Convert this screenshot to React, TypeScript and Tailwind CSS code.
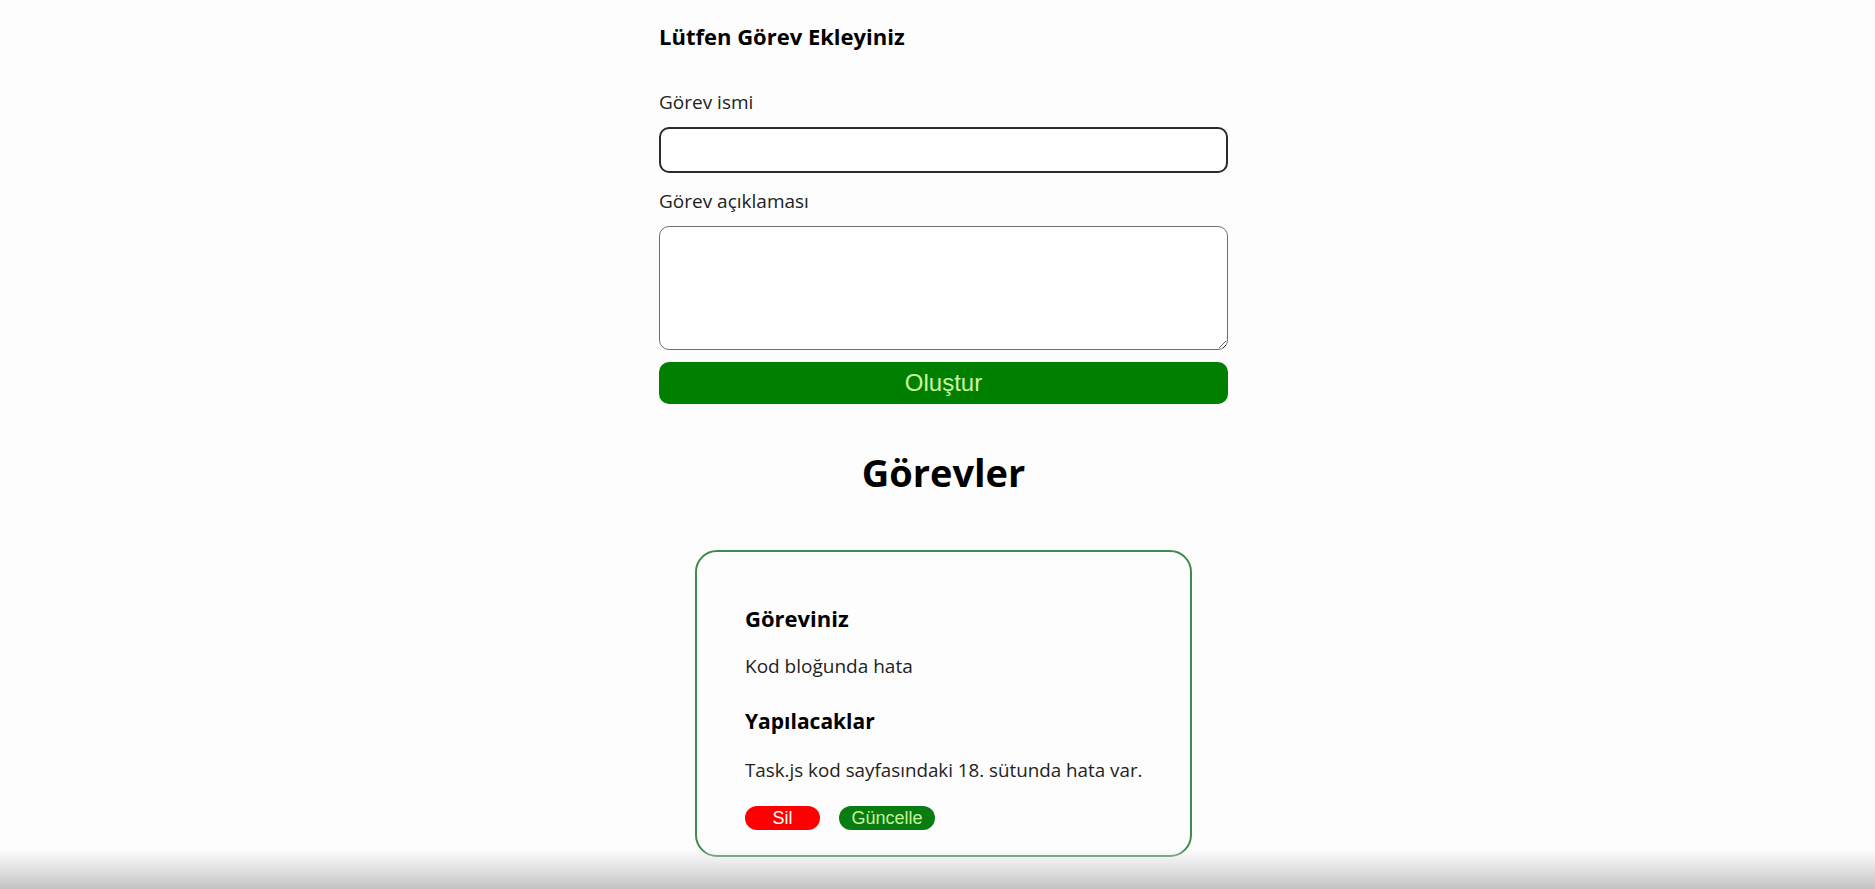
import React, { useState } from "react";

type Task = { id: number; title: string; desc: string };

const TaskCard = ({ task }: { task: Task }) => {
  return (
    <div className="mt-[54px] w-[497px] rounded-[22px] border-2 border-[#3f8a4c] pt-[52px] pr-[30px] pb-[25px] pl-[48px]">
      <h3 className="text-[22px] leading-[28px] font-bold text-black">Göreviniz</h3>
      <p className="mt-[22px] text-[19px] leading-[24px] text-[#222]">{task.title}</p>
      <h3 className="mt-[29px] text-[21px] leading-[28px] font-bold text-black">Yapılacaklar</h3>
      <p className="mt-[23px] whitespace-nowrap text-[18.8px] leading-[24px] text-[#222]">{task.desc}</p>
      <div className="mt-[24px] flex gap-[19px] font-['Liberation_Sans',Arial,sans-serif]">
        <button className="h-[24px] w-[75px] rounded-full bg-[#ff0000] text-[18px] leading-[24px] text-white">
          Sil
        </button>
        <button className="h-[24px] w-[96px] rounded-full bg-[#0a7d12] text-[18px] leading-[24px] text-[#c5f29a]">
          Güncelle
        </button>
      </div>
    </div>
  );
};

export default function App() {
  const [title, setTitle] = useState("");
  const [desc, setDesc] = useState("");
  const [tasks] = useState<Task[]>([
    {
      id: 1,
      title: "Kod bloğunda hata",
      desc: "Task.js kod sayfasındaki 18. sütunda hata var.",
    },
  ]);

  return (
    <div className="relative min-h-screen overflow-hidden bg-[#fdfdfd] font-['Open_Sans','Noto_Sans',sans-serif] text-black">
      <div className="flex justify-center pl-3">
        <div className="flex w-[569px] flex-col">
          <h3 className="pt-[22px] text-[22px] leading-[28px] font-bold">Lütfen Görev Ekleyiniz</h3>

          <label className="mt-[39px] text-[19px] leading-[26px] text-[#222]">Görev ismi</label>
          <input
            value={title}
            onChange={(e) => setTitle(e.target.value)}
            className="mt-[12px] h-[46px] rounded-[10px] border-2 border-[#2b2b2b] bg-white px-3 outline-none"
          />

          <label className="mt-[15px] text-[19px] leading-[26px] text-[#222]">Görev açıklaması</label>
          <textarea
            value={desc}
            onChange={(e) => setDesc(e.target.value)}
            className="mt-[12px] h-[124px] rounded-[10px] border border-[#6f6f6f] bg-white px-3 py-2 outline-none"
          />

          <button className="mt-[12px] h-[42px] rounded-[10px] bg-[#008000] font-['Liberation_Sans',Arial,sans-serif] text-[24px] text-[#cdf59f]">
            Oluştur
          </button>

          <h1 className="mt-[44px] text-center text-[38px] leading-[48px] font-bold">Görevler</h1>

          <div className="flex flex-col items-center pb-10">
            {tasks.map((task) => (
              <TaskCard key={task.id} task={task} />
            ))}
          </div>
        </div>
      </div>

      <div className="pointer-events-none fixed inset-x-0 bottom-0 h-[40px] bg-gradient-to-b from-[#fdfdfd00] via-[#e2e2e2] to-[#c2c2c2]" />
    </div>
  );
}
